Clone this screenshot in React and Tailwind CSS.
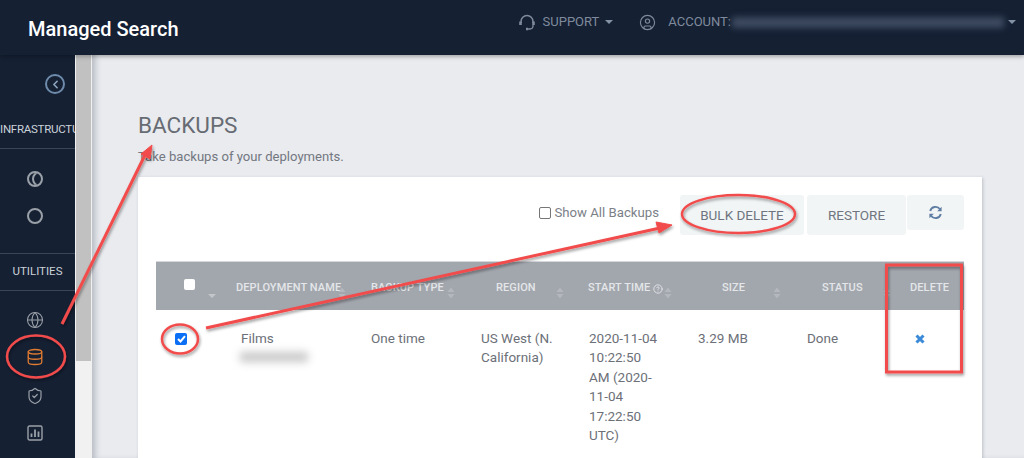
import React from "react";
import { ChevronLeft, CircleUser, Globe, Database, ShieldCheck, CircleHelp } from "lucide-react";

function Sort({ className = "" }) {
  return (
    <svg width="8" height="12" viewBox="0 0 8 12" className={"absolute " + className}>
      <path d="M4 0.5 L7.5 5 H0.5 Z M4 11.5 L7.5 7 H0.5 Z" fill="#b4b8be" />
    </svg>
  );
}

function Caret({ className = "" }) {
  return <span className={"inline-block w-0 h-0 border-x-[4px] border-x-transparent border-t-[4px] border-t-[#8492a6] " + className} />;
}

function Head({ children, className = "", sort }) {
  return (
    <div className={"relative flex items-center h-full text-[11px] font-medium text-[#e4e6e9] tracking-[0.1px] pt-[5px] " + className}>
      {children}
      {sort}
    </div>
  );
}

function Cell({ children, className = "" }) {
  return <div className={"pt-[19px] text-[13.5px] leading-[19.4px] text-[#6c7078] " + className}>{children}</div>;
}

function HeadsetIcon() {
  return (
    <svg width="16" height="17" viewBox="0 0 16 17" fill="none" stroke="currentColor" className="mr-[8px]">
      <path d="M2 9 V7.5 A6 6 0 0 1 14 7.5 V9" strokeWidth="1.5" />
      <path d="M1.5 7.5 V11" strokeWidth="2.6" />
      <path d="M14.5 7.5 V11" strokeWidth="2.6" />
      <path d="M14 11 V12.5 A3 3 0 0 1 11 15 H8.5" strokeWidth="1.3" />
      <path d="M7 15 H9" strokeWidth="2.4" />
    </svg>
  );
}

function ChartIcon() {
  return (
    <svg width="16" height="16" viewBox="0 0 16 16" fill="none" className="self-start ml-[27px] mt-[20px] text-[#9aa0a8]" stroke="currentColor">
      <rect x="1" y="1" width="14" height="14" rx="1.5" strokeWidth="1.4" />
      <path d="M4.5 12 V8.5 M8 12 V4.5 M11.5 12 V6.5" strokeWidth="1.8" />
    </svg>
  );
}

function RefreshIcon() {
  return (
    <svg width="15" height="15" viewBox="0 0 15 15" fill="none" stroke="currentColor">
      <path d="M2.2 6 A5.5 5.5 0 0 1 12 4.2" strokeWidth="1.9" />
      <path d="M12.8 9 A5.5 5.5 0 0 1 3 10.8" strokeWidth="1.9" />
      <path d="M13.6 1.8 V6.2 H9.2 Z" fill="currentColor" stroke="none" />
      <path d="M1.4 13.2 V8.8 H5.8 Z" fill="currentColor" stroke="none" />
    </svg>
  );
}

function Annotations() {
  return (
    <svg className="absolute left-0 top-0 pointer-events-none" width="1024" height="458" viewBox="0 0 1024 458" fill="none">
      <defs>
        <filter id="sh" x="-10%" y="-10%" width="120%" height="120%">
          <feDropShadow dx="1" dy="2" stdDeviation="1.6" floodColor="#000" floodOpacity="0.4" />
        </filter>
      </defs>
      <g filter="url(#sh)" stroke="#f24b4b" strokeWidth="3">
        <path d="M62 324 L146 153" />
        <path d="M152 145 L141 154 L150 159 Z" fill="#f24b4b" strokeWidth="1" />
        <path d="M206 328 L660 228" />
        <path d="M672 225 L656 222 L659 233 Z" fill="#f24b4b" strokeWidth="1" />
        <ellipse cx="36" cy="356.5" rx="29" ry="21" strokeWidth="2.5" />
        <ellipse cx="180" cy="339" rx="18" ry="14.5" strokeWidth="2.5" />
        <ellipse cx="738.5" cy="214" rx="56.5" ry="19" strokeWidth="2.5" />
        <rect x="886.5" y="265" width="75" height="107" strokeWidth="3" />
      </g>
    </svg>
  );
}

export default function App() {
  return (
    <div className="relative w-[1024px] h-[458px] overflow-hidden flex flex-col bg-[#e9ebef] font-['Roboto',sans-serif]">
      <header className="relative z-10 h-[55px] shrink-0 bg-[#152033] shadow-[0_2px_4px_rgba(0,0,0,0.25)] flex items-center pl-[28px] pt-[2px]">
        <div className="text-white text-[20px] font-medium">Managed Search</div>
        <div className="ml-auto flex items-center text-[#7f8b9d] text-[13px] pr-[8px] pb-[13px]">
          <HeadsetIcon />
          <span>SUPPORT</span>
          <Caret className="ml-[6px]" />
          <CircleUser size={17} strokeWidth={1.6} className="ml-[26px] mr-[12px]" />
          <span>ACCOUNT:</span>
          <span className="ml-[1px] w-[272px] h-[11px] bg-[#3d4a60] blur-[3px]" />
          <Caret className="ml-[4px]" />
        </div>
      </header>

      <div className="flex flex-1 min-h-0">
        <aside className="w-[75px] shrink-0 bg-[#152033] flex flex-col items-center overflow-hidden">
          <div className="self-end mr-[10px] mt-[19px] w-[20px] h-[20px] rounded-full border-2 border-[#6f8bab] flex items-center justify-center text-[#8fa5bf]">
            <ChevronLeft size={13} strokeWidth={3} />
          </div>
          <div className="w-full mt-[17px] h-[38px] border-b border-[#3a4557] flex items-center justify-start whitespace-nowrap overflow-hidden text-[11.5px] tracking-[-0.25px] text-[#ccd2da]">
            INFRASTRUCTURE
          </div>
          <div className="self-start ml-[27px] mt-[22px] h-[16px] w-[16px] rounded-full border-2 border-[#9aa0a8] relative overflow-hidden">
            <div className="absolute left-[3px] top-[-2px] w-[16px] h-[16px] rounded-full border-2 border-[#9aa0a8]" />
          </div>
          <div className="self-start ml-[27px] mt-[21px] h-[16px] w-[16px] rounded-full border-2 border-[#9aa0a8]" />
          <div className="w-full mt-[29px] h-[38px] border-y border-[#3a4557] flex items-center justify-center text-[11.5px] text-[#ccd2da]">
            UTILITIES
          </div>
          <Globe size={18} strokeWidth={1.4} className="self-start ml-[26px] mt-[20px] text-[#9aa0a8]" />
          <Database size={18} strokeWidth={1.7} className="self-start ml-[26px] mt-[19px] text-[#e07b32]" />
          <ShieldCheck size={18} strokeWidth={1.6} className="self-start ml-[26px] mt-[21px] text-[#9aa0a8]" />
          <ChartIcon />
        </aside>

        <div className="w-[17px] shrink-0 bg-[#f1f1f1]">
          <div className="w-[15px] ml-[1px] h-[306px] bg-[#c1c1c1]" />
        </div>

        <main className="flex-1 pl-[46px] pr-[42px] pt-[57px] shadow-[inset_6px_0_6px_-3px_rgba(60,70,85,0.3)]">
          <h1 className="text-[22.5px] leading-[26px] text-[#676b73] font-normal">BACKUPS</h1>
          <p className="mt-[9px] text-[13.1px] leading-[20px] text-[#73777f]">Take backups of your deployments.</p>
          <section className="mt-[10px] bg-white h-[300px] px-[18px] pt-[18px] shadow-[1px_1px_3px_rgba(60,70,85,0.25)]">
            <div className="flex items-start h-[66px]">
              <label className="ml-auto flex items-center h-[36px] text-[13.2px] text-[#7b7f87] pb-[1px]">
                <span className="w-[12px] h-[12px] rounded-[2px] border border-[#767676] bg-white mr-[3px]" />
                Show All Backups
              </label>
              <button className="ml-[21px] w-[124px] h-[40px] bg-[#f2f5f6] rounded-[3px] text-[13.5px] text-[#6f7580] pt-[1px]">BULK DELETE</button>
              <button className="ml-[3px] w-[99px] h-[40px] bg-[#f2f5f6] rounded-[3px] text-[13.5px] text-[#6f7580] pt-[1px]">RESTORE</button>
              <button className="ml-[1px] w-[57px] h-[35px] bg-[#f2f5f6] rounded-[3px] flex items-center justify-center text-[#5f7ea3]">
                <RefreshIcon />
              </button>
            </div>

            <div className="grid grid-cols-[70px_130px_110px_109px_108px_109px_108px_63px] h-[49px] bg-[#a2a6ad] border-t border-[#d5d7da]">
              <div className="relative">
                <span className="absolute left-[28px] top-[17px] w-[11px] h-[11px] rounded-[2px] bg-white" />
                <Caret className="absolute left-[52px] top-[32px] border-t-[#c3c6cb]" />
              </div>
              <Head className="pl-[10px]" sort={<Sort className="right-[10px] top-[25px]" />}>DEPLOYMENT NAME</Head>
              <Head className="pl-[15px]" sort={<Sort className="right-[11px] top-[25px]" />}>BACKUP TYPE</Head>
              <Head className="pl-[30px]" sort={<Sort className="right-[11px] top-[25px]" />}>REGION</Head>
              <Head className="pl-[13px]" sort={<Sort className="right-[11px] top-[25px]" />}>
                START TIME
                <CircleHelp size={10} strokeWidth={2.2} className="ml-[3px]" />
              </Head>
              <Head className="pl-[39px]" sort={<Sort className="right-[11px] top-[25px]" />}>SIZE</Head>
              <Head className="pl-[30px]" sort={<Sort className="right-[9px] top-[25px]" />}>STATUS</Head>
              <Head className="pl-[10px]">DELETE</Head>
            </div>

            <div className="grid grid-cols-[70px_130px_110px_109px_108px_109px_108px_63px]">
              <div className="relative">
                <span className="absolute left-[19px] top-[23px] w-[12px] h-[12px] rounded-[2px] bg-[#0b6ff5] flex items-center justify-center">
                  <svg width="9" height="8" viewBox="0 0 9 8"><path d="M1 4 L3.5 6.5 L8 1.2" stroke="#fff" strokeWidth="2" fill="none" /></svg>
                </span>
              </div>
              <Cell className="pl-[15px]">
                Films
                <div className="mt-[4px] -ml-[1px] w-[68px] h-[10px] bg-[#c8c8c8] blur-[4px]" />
              </Cell>
              <Cell className="pl-[15px]">One time</Cell>
              <Cell className="pl-[15px]">US West (N. California)</Cell>
              <Cell className="pl-[14px] pr-[22px]">2020-11-04 10:22:50 AM (2020-11-04 17:22:50 UTC)</Cell>
              <Cell className="pl-[15px]">3.29 MB</Cell>
              <Cell className="pl-[15px]">Done</Cell>
              <div className="relative">
                <svg width="10" height="10" viewBox="0 0 10 10" className="absolute left-[15px] top-[24px]">
                  <path d="M1.5 1.5 L8.5 8.5 M8.5 1.5 L1.5 8.5" stroke="#3a8ad8" strokeWidth="3" />
                </svg>
              </div>
              <div />
            </div>
          </section>
        </main>
      </div>
      <Annotations />
    </div>
  );
}
